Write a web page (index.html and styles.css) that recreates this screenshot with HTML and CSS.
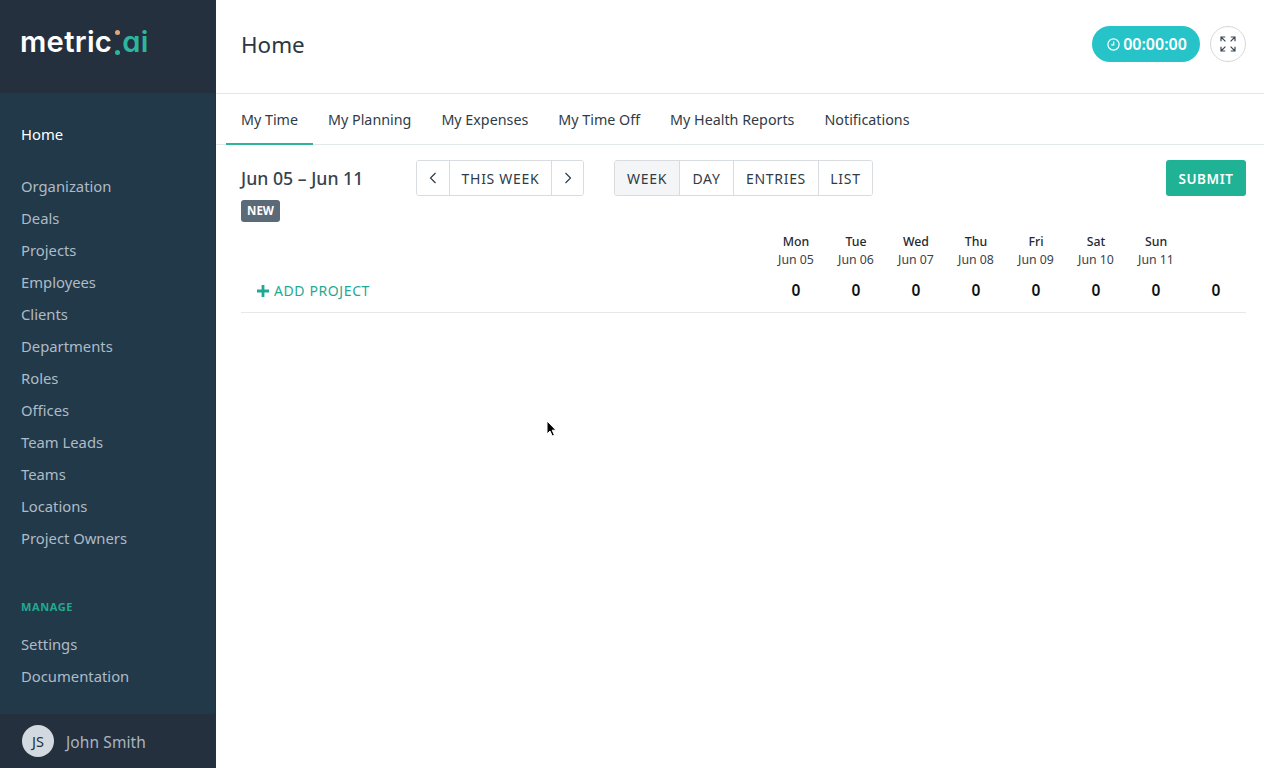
FILE: index.html
```html
<!DOCTYPE html>
<html lang="en">
<head>
<meta charset="utf-8">
<title>Home</title>
<link rel="stylesheet" href="styles.css">
</head>
<body>
<div class="app">
  <aside class="sidebar">
    <div class="brand">
      <span class="logo"><span class="logo-white">metric</span><span class="logo-colon"><i class="dot dot-orange"></i><i class="dot dot-green"></i></span><span class="logo-green">ai</span></span>
    </div>
    <nav class="nav">
      <a class="nav-item active">Home</a>
      <div class="nav-group">
        <a class="nav-item">Organization</a>
        <a class="nav-item">Deals</a>
        <a class="nav-item">Projects</a>
        <a class="nav-item">Employees</a>
        <a class="nav-item">Clients</a>
        <a class="nav-item">Departments</a>
        <a class="nav-item">Roles</a>
        <a class="nav-item">Offices</a>
        <a class="nav-item">Team Leads</a>
        <a class="nav-item">Teams</a>
        <a class="nav-item">Locations</a>
        <a class="nav-item">Project Owners</a>
      </div>
      <div class="nav-label">MANAGE</div>
      <a class="nav-item">Settings</a>
      <a class="nav-item">Documentation</a>
    </nav>
    <div class="user">
      <span class="avatar">JS</span>
      <span class="user-name">John Smith</span>
    </div>
  </aside>
  <main class="main">
    <header class="topbar">
      <h1 class="title">Home</h1>
      <div class="top-actions">
        <button class="timer">
          <svg class="timer-icon" width="13" height="13" viewBox="0 0 13 13" fill="none" stroke="currentColor" stroke-width="1.2"><circle cx="6.5" cy="6.5" r="5.6"/><path d="M6.7 3.4v3.4H4.2"/></svg>
          <span>00:00:00</span>
        </button>
        <button class="expand">
          <svg width="16" height="16" viewBox="0 0 16 16" fill="none" stroke="#3a4652" stroke-width="1.2"><path d="M1 5.2V1h4.2M1 1l4.4 4.4M15 5.2V1h-4.2M15 1l-4.4 4.4M1 10.8V15h4.2M1 15l4.4-4.4M15 10.8V15h-4.2M15 15l-4.4-4.4"/></svg>
        </button>
      </div>
    </header>
    <div class="tabs">
      <a class="tab current">My Time</a>
      <a class="tab">My Planning</a>
      <a class="tab">My Expenses</a>
      <a class="tab">My Time Off</a>
      <a class="tab">My Health Reports</a>
      <a class="tab">Notifications</a>
    </div>
    <section class="content">
      <div class="toolbar">
        <div class="range">
          <div class="range-text">Jun 05 – Jun 11</div>
          <span class="badge">NEW</span>
        </div>
        <div class="btn-group week-nav">
          <button class="seg seg-icon"><svg width="8" height="12" viewBox="0 0 8 12" fill="none" stroke="#2f3b46" stroke-width="1.2"><path d="M6.5 1 1.5 6l5 5"/></svg></button>
          <button class="seg this-week">THIS WEEK</button>
          <button class="seg seg-icon"><svg width="8" height="12" viewBox="0 0 8 12" fill="none" stroke="#2f3b46" stroke-width="1.2"><path d="M1.5 1l5 5-5 5"/></svg></button>
        </div>
        <div class="btn-group views">
          <button class="seg selected view-week">WEEK</button>
          <button class="seg view-day">DAY</button>
          <button class="seg view-entries">ENTRIES</button>
          <button class="seg view-list">LIST</button>
        </div>
        <button class="submit">SUBMIT</button>
      </div>
      <div class="grid-head">
        <div class="day"><b>Mon</b><span>Jun 05</span></div>
        <div class="day"><b>Tue</b><span>Jun 06</span></div>
        <div class="day"><b>Wed</b><span>Jun 07</span></div>
        <div class="day"><b>Thu</b><span>Jun 08</span></div>
        <div class="day"><b>Fri</b><span>Jun 09</span></div>
        <div class="day"><b>Sat</b><span>Jun 10</span></div>
        <div class="day"><b>Sun</b><span>Jun 11</span></div>
        <div class="day"></div>
      </div>
      <div class="grid-row">
        <a class="add-project"><svg width="12" height="12" viewBox="0 0 12 12" fill="#1fa893"><path d="M4.6 0h2.8v4.6H12v2.8H7.4V12H4.6V7.4H0V4.6h4.6z"/></svg>ADD PROJECT</a>
        <div class="total">0</div>
        <div class="total">0</div>
        <div class="total">0</div>
        <div class="total">0</div>
        <div class="total">0</div>
        <div class="total">0</div>
        <div class="total">0</div>
        <div class="total">0</div>
      </div>
    </section>
  </main>
</div>
<svg class="cursor" width="12" height="18" viewBox="0 0 12 18"><path d="M1 1v13l3-3 2.2 5 2.2-1-2.2-4.8H10z" fill="#000" stroke="#fff" stroke-width="1"/></svg>
</body>
</html>
```
FILE: styles.css
```css
* { box-sizing: border-box; }
html, body { margin: 0; height: 100%; }
body {
  font-family: "Noto Sans", "Open Sans", sans-serif;
  color: #2f3b46;
  background: #fff;
  overflow: hidden;
}
button { font-family: inherit; cursor: pointer; }
.app { display: flex; height: 768px; }
.sidebar {
  width: 216px;
  flex: none;
  background: #22394a;
  display: flex;
  flex-direction: column;
  border-right: 1px solid #26333f;
}
.brand {
  height: 93px;
  flex: none;
  background: #24303e;
  padding: 24px 0 0 20px;
}
.logo {
  display: flex;
  align-items: baseline;
  font-family: "Inter", "Noto Sans", sans-serif;
  font-feature-settings: "cv11" 1;
  font-weight: 600;
  font-size: 29.2px;
  line-height: 36px;
  letter-spacing: 0.3px;
}
.logo-white { color: #fff; }
.logo-green { color: #2db69d; }
.logo-colon {
  display: inline-flex;
  flex-direction: column;
  justify-content: space-between;
  align-self: center;
  width: 5px;
  height: 25px;
  margin: 0 2px 0 3px;
}
.dot { display: block; width: 5px; height: 5px; border-radius: 50%; }
.dot-orange { background: #e0a878; }
.dot-green { background: #2db69d; }
.nav { flex: 1; padding-top: 25px; display: flex; flex-direction: column; }
.nav-item {
  display: block;
  height: 32px;
  padding-left: 21px;
  font-size: 14.8px;
  line-height: 32px;
  color: #afbbc5;
}
.nav-item.active { color: #fff; }
.nav-group { margin-top: 20px; }
.nav-label {
  margin-top: 42px;
  height: 32px;
  padding-left: 21px;
  font-size: 11px;
  line-height: 22px;
  font-weight: 700;
  letter-spacing: 0.6px;
  color: #23a98f;
}
.user {
  height: 54px;
  flex: none;
  background: #24303e;
  display: flex;
  align-items: center;
  padding-left: 22px;
  gap: 12px;
}
.avatar {
  width: 32px;
  height: 32px;
  border-radius: 50%;
  background: #d3dadf;
  color: #24303e;
  font-size: 14.5px;
  line-height: 32px;
  text-align: center;
}
.user-name { font-size: 15.5px; color: #a9b5bf; letter-spacing: 0.1px; padding-top: 2px; }
.main { flex: 1; min-width: 0; display: flex; flex-direction: column; }
.topbar {
  height: 94px;
  flex: none;
  border-bottom: 1px solid #e3e6e8;
  display: flex;
  align-items: center;
  justify-content: space-between;
  padding: 0 18px 6px 25px;
}
.title { margin: 0; font-size: 22.4px; font-weight: 400; color: #2b3742; padding-top: 2px; }
.top-actions { display: flex; align-items: center; gap: 10px; }
.timer {
  width: 108px;
  height: 36px;
  border: 0;
  border-radius: 18px;
  background: #26c3c8;
  color: #fff;
  font-size: 16px;
  font-weight: 600;
  display: flex;
  align-items: center;
  justify-content: center;
  gap: 3px;
  padding: 0 0 0 2px;
}
.timer-icon { margin-top: 1px; }
.expand {
  width: 36px;
  height: 36px;
  border-radius: 50%;
  background: #fff;
  border: 1px solid #d4d7da;
  padding: 0;
  display: flex;
  align-items: center;
  justify-content: center;
}
.tabs {
  height: 51px;
  flex: none;
  border-bottom: 1px solid #e3e8e8;
  display: flex;
  padding-left: 10px;
}
.tab {
  height: 51px;
  padding: 0 15px;
  font-size: 14.3px;
  line-height: 51px;
  color: #2f3b46;
}
.tab.current { border-bottom: 2px solid #2fb39b; }
.content { padding: 15px 18px 0 25px; flex: 1; }
.toolbar { display: flex; align-items: flex-start; height: 62px; }
.range { width: 175px; flex: none; }
.range-text { font-size: 17.7px; line-height: 36px; color: #38434e; font-weight: 500; }
.badge {
  display: inline-block;
  width: 39px;
  height: 22px;
  margin-top: 4px;
  border-radius: 3px;
  background: #5b6a79;
  color: #fff;
  font-size: 11.5px;
  font-weight: 700;
  line-height: 22px;
  text-align: center;
}
.btn-group {
  display: flex;
  height: 36px;
  border: 1px solid #d9dcdf;
  border-radius: 3px;
  overflow: hidden;
}
.views { margin-left: 30px; }
.seg {
  height: 34px;
  border: 0;
  border-right: 1px solid #d9dcdf;
  background: #fff;
  padding: 0;
  font-size: 14px;
  letter-spacing: 0.7px;
  color: #2f3b46;
}
.seg:last-child { border-right: 0; }
.seg-icon { width: 33px; display: flex; align-items: center; justify-content: center; }
.seg-icon:last-child { width: 31px; }
.this-week { width: 102px; }
.view-week { width: 65px; }
.view-day { width: 54px; }
.view-entries { width: 85px; }
.view-list { width: 53px; }
.seg.selected { background: #f3f5f6; }
.submit {
  margin-left: auto;
  width: 80px;
  height: 36px;
  border: 0;
  border-radius: 3px;
  background: #1fb295;
  color: #fff;
  font-size: 13.5px;
  font-weight: 600;
  letter-spacing: 0.6px;
  padding: 1px 0 0;
}
.grid-head {
  display: grid;
  grid-template-columns: repeat(8, 60px);
  justify-content: end;
  height: 38px;
  margin-top: 11px;
}
.day { display: flex; flex-direction: column; align-items: center; font-size: 12.3px; line-height: 18px; }
.day b { font-weight: 500; color: #1f2a33; }
.day span { color: #38434e; }
.grid-row {
  display: grid;
  grid-template-columns: 1fr repeat(8, 60px);
  height: 42px;
  align-items: center;
  border-bottom: 1px solid #e6e8ea;
  padding-bottom: 2px;
}
.add-project {
  display: flex;
  align-items: center;
  gap: 5px;
  padding-left: 16px;
  font-size: 14px;
  letter-spacing: 0.6px;
  color: #1fa893;
}
.total { text-align: center; font-size: 15.5px; font-weight: 600; color: #111; padding-bottom: 2px; }
.cursor { position: absolute; left: 546px; top: 420px; }
```
